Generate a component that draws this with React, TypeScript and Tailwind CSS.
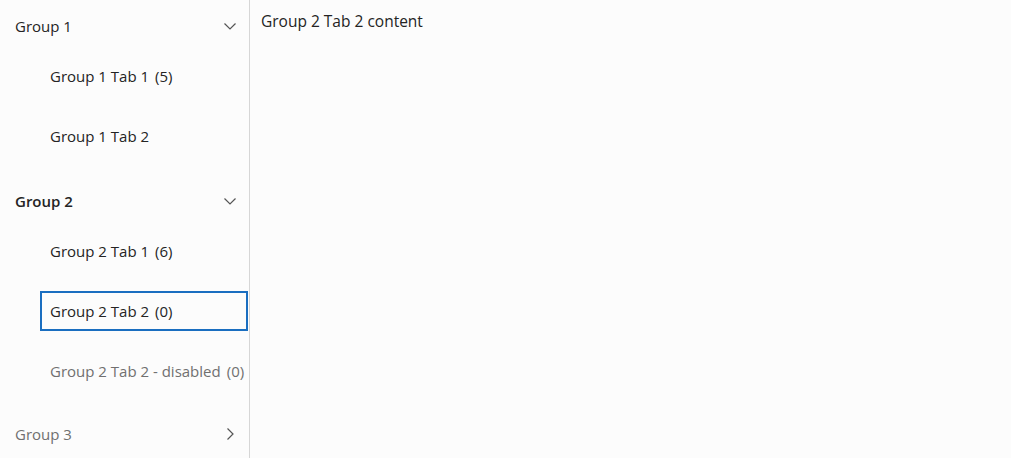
type Tab = { label: string; count?: number; disabled?: boolean; selected?: boolean };

const groups: { name: string; open: boolean; active?: boolean; tabs: Tab[] }[] = [
  {
    name: "Group 1",
    open: true,
    tabs: [{ label: "Group 1 Tab 1", count: 5 }, { label: "Group 1 Tab 2" }],
  },
  {
    name: "Group 2",
    open: true,
    active: true,
    tabs: [
      { label: "Group 2 Tab 1", count: 6 },
      { label: "Group 2 Tab 2", count: 0, selected: true },
      { label: "Group 2 Tab 2 - disabled", count: 0, disabled: true },
    ],
  },
  { name: "Group 3", open: false, tabs: [] },
];

function Chevron({ open }: { open: boolean }) {
  return (
    <svg width="12" height="12" viewBox="0 0 12 12" fill="none" stroke="#555" strokeWidth="1.2">
      {open ? <polyline points="0.5,3.5 6,9 11.5,3.5" /> : <polyline points="3.5,0.5 9,6 3.5,11.5" />}
    </svg>
  );
}

export default function App() {
  return (
    <div
      className="flex w-[1011px] h-[458px] bg-[#fcfcfc] text-[#242424] text-[15px]"
      style={{ fontFamily: '"Open Sans", "Noto Sans", sans-serif' }}
    >
      {/* nav lateral */}
      <nav className="w-[250px] shrink-0 border-r border-[#d6d6d6] pt-[6px]">
        {groups.map((g, gi) => (
          <div key={g.name} className={gi === 0 ? "" : gi === 1 ? "mt-[25px]" : "mt-[23px]"}>
            <div
              className={
                "h-10 flex items-center justify-between pl-[15px] pr-[13px] " +
                (g.active ? "font-semibold" : "") +
                (!g.open ? " text-[#707070]" : "")
              }
            >
              <span>{g.name}</span>
              <Chevron open={g.open} />
            </div>

            {g.open && (
              <div className="flex flex-col gap-5 mt-[10px]">
                {g.tabs.map((t) => (
                  <div
                    key={t.label}
                    className={
                      "h-10 ml-10 flex items-center whitespace-nowrap " +
                      (t.selected ? "border-2 border-[#1a6ec0] pl-[8px] mr-[1px]" : "pl-[10px]") +
                      (t.disabled ? " text-[#707070]" : "")
                    }
                  >
                    {t.label}
                    {t.count !== undefined && <span className="ml-[6px]">({t.count})</span>}
                  </div>
                ))}
              </div>
            )}
          </div>
        ))}
      </nav>

      <main className="flex-1 pl-[11px] pt-[10px] text-[15.5px]">Group 2 Tab 2 content</main>
    </div>
  );
}
